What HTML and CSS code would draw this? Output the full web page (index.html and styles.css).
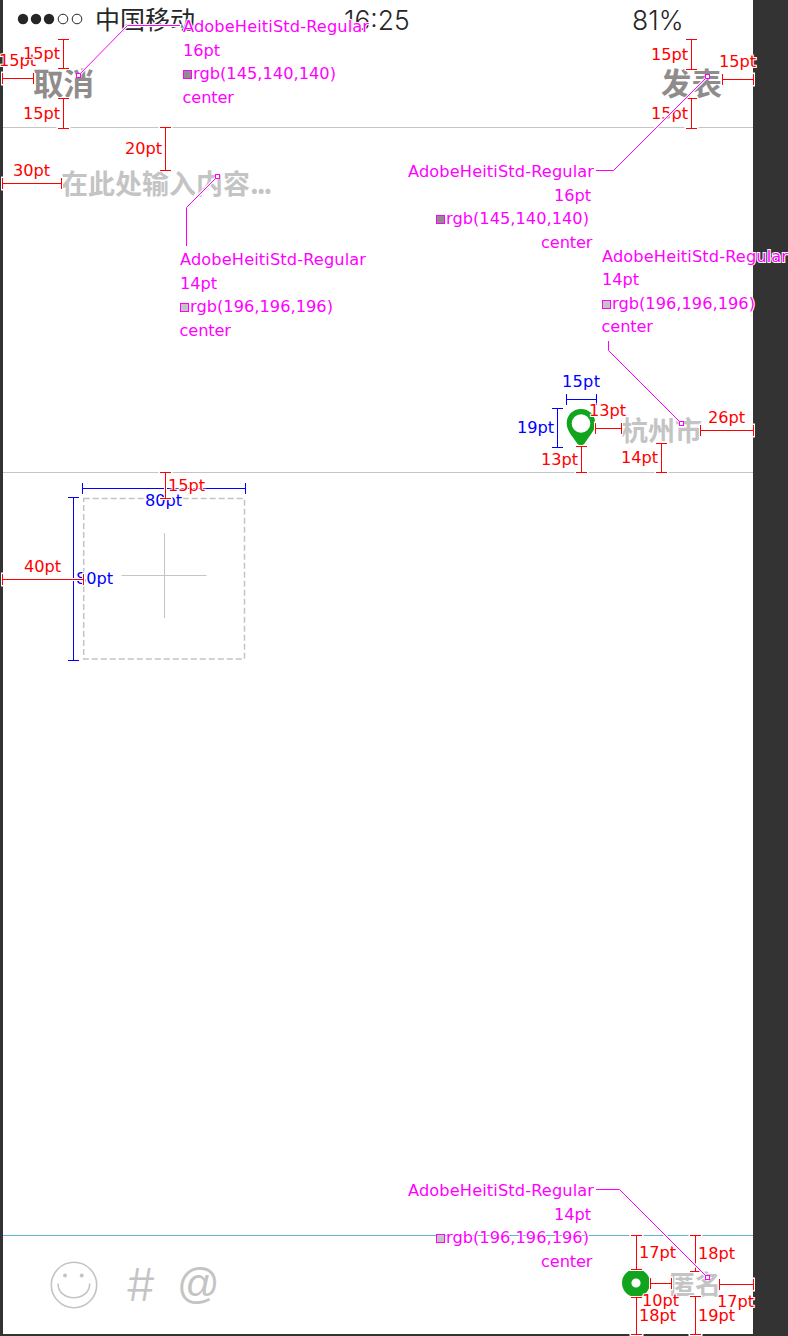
FILE: index.html
```html
<!DOCTYPE html>
<html lang="zh-CN">
<head>
<meta charset="utf-8">
<title>发表</title>
<link rel="stylesheet" href="styles.css">
</head>
<body>
<main class="phone">
  <header class="top">
    <div class="status">
      <div class="carrier">
        <svg class="signal" width="66" height="12" viewBox="0 0 66 12"><circle cx="6" cy="6" r="5.2"/><circle cx="19" cy="6" r="5.2"/><circle cx="32" cy="6" r="5.2"/><circle class="off" cx="46" cy="6" r="4.8"/><circle class="off" cx="60" cy="6" r="4.8"/></svg>
        <span class="operator">中国移动</span>
      </div>
      <span class="clock">16:25</span>
      <span class="battery">81%</span>
    </div>
    <nav class="nav"><span>取消</span><span>发表</span></nav>
  </header>
  <section class="editor">
    <p class="placeholder">在此处输入内容<span class="dots">...</span></p>
    <div class="location">
      <svg width="30" height="37" viewBox="0 0 30 37"><path class="green" fill-rule="evenodd" d="M15 0C6.700 0 .7 6.200 .7 14.200C.7 19.800 3.900 24.100 6.800 28.300L11.600 35.100Q14.800 38 18.200 35.100L22.800 28.300C26 23.700 29.300 19.800 29.300 14.200C29.300 6.200 23.300 0 15 0ZM15 5.200A9.300 9.300 0 1 1 15 23.800A9.300 9.300 0 1 1 15 5.200Z"/></svg>
      <span>杭州市</span>
    </div>
  </section>
  <section class="photos">
    <svg class="add" width="164" height="164" viewBox="0 0 164 164"><rect class="dash" x="1.700" y="1.500" width="160.800" height="160.500"/><path class="plus" d="M39.500 78.500H124.500M82.500 36V121"/></svg>
  </section>
  <footer class="tools">
    <div class="icons">
      <svg width="48" height="48" viewBox="0 0 48 48"><g class="face"><circle cx="24" cy="24" r="22.700"/><path d="M8 22.500C8 41.500 39.700 41.500 39.700 22.500"/></g><circle class="eye" cx="15" cy="14.500" r="2"/><circle class="eye" cx="31.700" cy="14.500" r="2"/></svg>
      <span class="hash">#</span>
      <span class="at">@</span>
    </div>
    <div class="anonymous">
      <svg width="28" height="28" viewBox="0 0 28 28"><circle class="ring" cx="14" cy="14" r="9.300"/></svg>
      <span>匿名</span>
    </div>
  </footer>
</main>

<svg class="spec" width="788" height="1336" viewBox="0 0 788 1336">
  <defs>
    <path id="blue-lines" d="M566.500 399.500H596.500M566.500 394V405M596.500 394V405M557.500 408.500V447.500M552 408.500H563M552 447.500H563M82.500 488.500H245.500M82.500 483V494M245.500 483V494M73.500 497.500V660.500M68 497.500H79M68 660.500H79"/>
    <path id="red-lines" d="M63.500 39.500V68.500M58 39.500H69M58 68.500H69M63.500 98.500V128.500M58 98.500H69M58 128.500H69M2.500 78.500H33.500M2.500 73V84M33.500 73V84M691.500 39.500V69.500M686 39.500H697M686 69.500H697M691.500 98.500V128.500M686 98.500H697M686 128.500H697M722.500 79.500H753.500M722.500 74V85M753.500 74V85M165.500 127.500V170.500M160 127.500H171M160 170.500H171M2.500 183.500H61.500M2.500 178V189M61.500 178V189M595.500 428.500H621.500M595.500 423V434M621.500 423V434M700.500 430.500H753.500M700.500 425V436M753.500 425V436M581.500 446.500V472.500M576 446.500H587M576 472.500H587M661.500 443.500V472.500M656 443.500H667M656 472.500H667M165.500 472.500V498.500M160 472.500H171M160 498.500H171M2.500 579.500H83.500M2.500 574V585M83.500 574V585M636.500 1235.500V1269.500M631 1235.500H642M631 1269.500H642M695.500 1235.500V1271.500M690 1235.500H701M690 1271.500H701M650.500 1283.500H671.500M650.500 1278V1289M671.500 1278V1289M719.500 1284.500H753.500M719.500 1279V1290M753.500 1279V1290M636.500 1297.500V1334.500M631 1297.500H642M631 1334.500H642M695.500 1296.500V1334.500M690 1296.500H701M690 1334.500H701"/>
    <path id="leaders" d="M78.500 75.500L127.500 25.500H180M217.500 176.500L186.500 207.500V246M707.500 76.500L613.500 170.500H596M681.500 423.500L608.500 350.500V341M707.500 1277.500L619.500 1189.500H596"/>
  </defs>
  <use class="halo" href="#blue-lines"/><use class="ink blue" href="#blue-lines"/>
  <g class="label blue">
    <text x="562" y="387" textLength="38">15pt</text><text x="517" y="433" textLength="37">19pt</text>
    <text x="145" y="506" textLength="37">80pt</text><text x="76" y="584" textLength="37">80pt</text>
  </g>
  <use class="halo" href="#red-lines"/><use class="ink red" href="#red-lines"/>
  <g class="label red">
    <text x="-1" y="66" textLength="37">15pt</text><text x="23" y="59" textLength="37">15pt</text><text x="23" y="119" textLength="37">15pt</text>
    <text x="651" y="60" textLength="37">15pt</text><text x="719" y="67" textLength="37">15pt</text><text x="651" y="119" textLength="37">15pt</text>
    <text x="125" y="154" textLength="37">20pt</text><text x="13" y="176" textLength="37">30pt</text>
    <text x="589" y="416" textLength="37">13pt</text><text x="708" y="423" textLength="37">26pt</text>
    <text x="541" y="465" textLength="37">13pt</text><text x="621" y="463" textLength="37">14pt</text>
    <text x="168" y="491" textLength="37">15pt</text><text x="24" y="572" textLength="37">40pt</text>
    <text x="639" y="1258" textLength="37">17pt</text><text x="698" y="1259" textLength="37">18pt</text>
    <text x="642" y="1306" textLength="37">10pt</text><text x="717" y="1307" textLength="37">17pt</text>
    <text x="639" y="1321" textLength="37">18pt</text><text x="698" y="1321" textLength="37">19pt</text>
  </g>
  <use class="halo" href="#leaders"/><use class="ink magenta" href="#leaders"/>
  <g class="handle"><rect x="76.500" y="73.500" width="4" height="4"/><rect x="215.500" y="174.500" width="4" height="4"/><rect x="705.500" y="74.500" width="4" height="4"/><rect x="679.500" y="421.500" width="4" height="4"/><rect x="705.500" y="1275.500" width="4" height="4"/></g>
  <g class="label magenta">
    <text x="183" y="32" textLength="186">AdobeHeitiStd-Regular</text><text x="183" y="56" textLength="37">16pt</text><text x="193" y="79" textLength="143">rgb(145,140,140)</text><text x="182.500" y="103" textLength="51.500">center</text>
    <text x="180" y="265" textLength="186">AdobeHeitiStd-Regular</text><text x="180" y="289" textLength="37">14pt</text><text x="190" y="312" textLength="143">rgb(196,196,196)</text><text x="179.500" y="336" textLength="51.500">center</text>
    <text x="408" y="177" textLength="186">AdobeHeitiStd-Regular</text><text x="554" y="201" textLength="37">16pt</text><text x="446" y="224" textLength="143">rgb(145,140,140)</text><text x="541" y="248" textLength="51.500">center</text>
    <text x="602" y="262" textLength="186">AdobeHeitiStd-Regular</text><text x="602" y="285" textLength="37">14pt</text><text x="612" y="309" textLength="143">rgb(196,196,196)</text><text x="601.500" y="332" textLength="51.500">center</text>
    <text x="408" y="1196" textLength="186">AdobeHeitiStd-Regular</text><text x="554" y="1220" textLength="37">14pt</text><text x="446" y="1243" textLength="143">rgb(196,196,196)</text><text x="541" y="1267" textLength="51.500">center</text>
  </g>
  <g class="swatch"><rect class="dark" x="183.500" y="70.500" width="8" height="8"/><rect x="180.500" y="303.500" width="8" height="8"/><rect class="dark" x="436.500" y="215.500" width="8" height="8"/><rect x="602.500" y="300.500" width="8" height="8"/><rect x="436.500" y="1234.500" width="8" height="8"/></g>
</svg>
</body>
</html>
```
FILE: styles.css
```css
* { box-sizing: border-box; }
body { margin: 0; background: #333; height: 1336px; overflow: hidden; position: relative; font-family: "Noto Sans CJK SC", sans-serif; }
svg { display: block; flex: none; }
.phone { width: 750px; height: 1334px; margin-left: 3px; background: #fff; display: flex; flex-direction: column; }

.top { height: 128px; border-bottom: 1px solid #c4c4c4; }
.status { height: 40px; display: grid; grid-template-columns: 341px 1fr 121px; align-items: center; color: #262626; }
.carrier { display: flex; align-items: center; gap: 12px; padding-left: 14px; }
.signal { fill: #262626; margin-top: -2px; }
.signal .off { fill: none; stroke: #262626; stroke-width: 1; }
.operator { font-size: 25px; line-height: 36px; padding-bottom: 4px; }
.clock, .battery { font-family: Inter, sans-serif; font-weight: 300; font-size: 26.5px; line-height: 40px; letter-spacing: 0; }
.nav { display: flex; justify-content: space-between; padding: 0 31px 0 30px; font-size: 30.5px; line-height: 85px; font-weight: 700; color: #918c8c; }

.editor { height: 345px; border-bottom: 1px solid #c4c4c4; color: #c4c4c4; font-size: 27px; font-weight: 700; display: flex; flex-direction: column; justify-content: space-between; }
.placeholder { margin: 0; padding: 35px 0 0 58px; line-height: 40px; }
.dots { letter-spacing: -2px; }
.location { display: flex; align-items: flex-start; justify-content: flex-end; gap: 25px; padding-right: 51px; height: 63px; }
.location span { line-height: 42px; }
.green { fill: #10a51c; }

.photos { flex: 1; padding: 24px 0 0 79px; }
.dash { fill: none; stroke: #c4c4c4; stroke-width: 1.5; stroke-dasharray: 6 3; }
.plus { fill: none; stroke: #c4c4c4; stroke-width: 1; }

.tools { height: 99px; border-top: 1px solid #62b4cc; display: flex; justify-content: space-between; align-items: center; padding: 0 32px 0 46.5px; color: #c4c4c4; }
.icons { display: flex; align-items: center; gap: 29px; }
.face { fill: none; stroke: #c4c4c4; stroke-width: 1.6; }
.eye { fill: #c4c4c4; }
.hash { font-family: Inter, sans-serif; font-weight: 300; font-size: 45px; line-height: 60px; }
.at { font-family: "Liberation Sans", sans-serif; font-size: 42px; line-height: 56px; padding-bottom: 3px; margin-left: -7px; }
.anonymous { display: flex; align-items: center; gap: 19px; font-size: 26px; line-height: 40px; font-weight: 700; padding-bottom: 4px; }
.ring { fill: none; stroke: #10a51c; stroke-width: 9.4; }

.spec { position: absolute; left: 0; top: 0; }
.halo { fill: none; stroke: #fff; stroke-width: 3; stroke-linecap: square; }
.ink { fill: none; stroke-width: 1; }
.ink.red { stroke: #f00; }
.ink.blue { stroke: #00f; }
.ink.magenta { stroke: #f0f; }
.label { font-family: "DejaVu Sans", sans-serif; font-size: 16.2px; paint-order: stroke; stroke: #fff; stroke-width: 2px; }
.label.red { fill: #f00; }
.label.blue { fill: #00f; }
.label.magenta { fill: #f0f; }
.handle rect { fill: #fff; stroke: #f0f; }
.swatch rect { fill: #c4c4c4; stroke: #f0f; }
.swatch .dark { fill: #918c8c; }
```
